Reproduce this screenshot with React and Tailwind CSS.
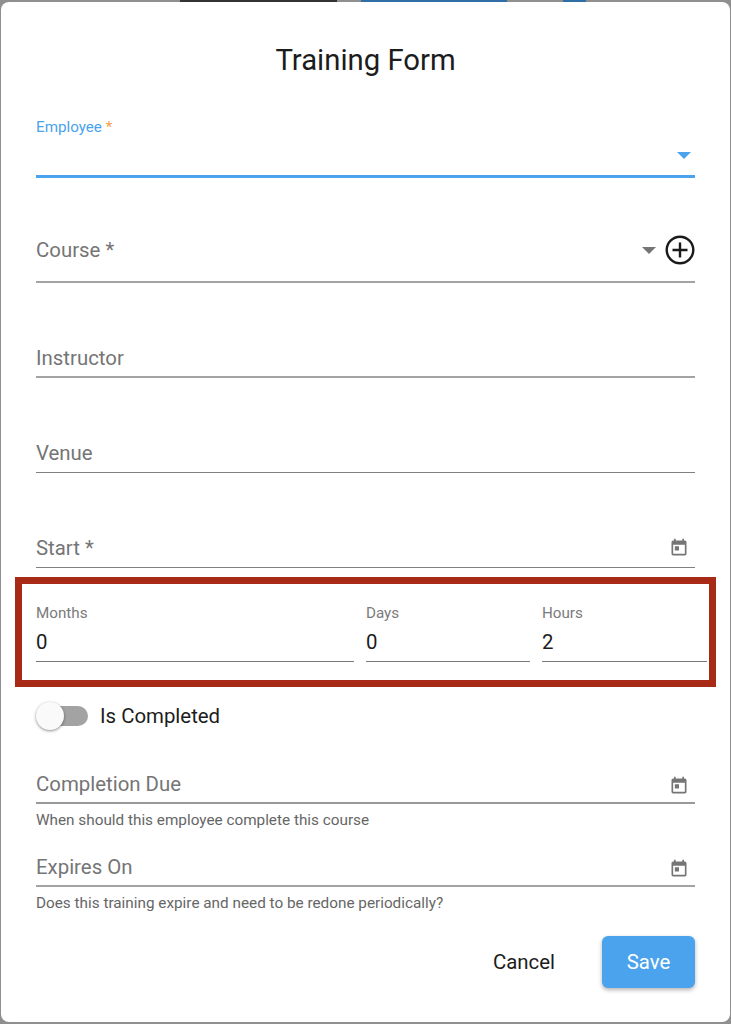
const ROBOTO = "font-['Roboto',sans-serif]";

const CalendarIcon = () => (
  <svg width="20" height="20" viewBox="0 0 24 24" fill="#757575">
    <path d="M19 3h-1V1h-2v2H8V1H6v2H5c-1.11 0-1.99.9-1.99 2L3 19c0 1.1.89 2 2 2h14c1.1 0 2-.9 2-2V5c0-1.1-.9-2-2-2zm0 16H5V8h14v11zM7 10h5v5H7z" />
  </svg>
);

const Caret = ({ color }) => (
  <svg width="14" height="7" viewBox="0 0 14 7" fill={color}>
    <path d="M0 0h14L7 7z" />
  </svg>
);

const PlusCircle = () => (
  <svg width="30" height="30" viewBox="0 0 30 30" fill="none" stroke="#1a1a1a" strokeWidth="2.4">
    <circle cx="15" cy="15" r="13.3" />
    <path d="M15 7.5v15M7.5 15h15" />
  </svg>
);

const DateIcon = ({ pad }) => (
  <div className={`pr-[6px] ${pad}`}>
    <CalendarIcon />
  </div>
);

const Field = ({ label, height, line, labelPad, right, helper }) => (
  <div>
    <div className={`flex items-end justify-between ${line} ${height}`}>
      <span className={`text-[20.4px] leading-[30px] text-[#757575] ${labelPad}`}>{label}</span>
      {right}
    </div>
    {helper && <div className="text-[15.3px] leading-[17px] mt-2 text-[#666666]">{helper}</div>}
  </div>
);

const DurationField = ({ label, value }) => (
  <div className="border-b border-[#777777] h-[59px]">
    <div className="text-[15.2px] leading-[17px] pt-[2px] text-[#7a7a7a]">{label}</div>
    <div className="text-[20.4px] leading-[24px] mt-[8px] text-[#1c1c1c]">{value}</div>
  </div>
);

export default function App() {
  return (
    <div className={`${ROBOTO} w-[731px] h-[1024px] overflow-hidden bg-[#8f8f8f]`}>
      {/* sliver of the page behind the dialog */}
      <div className="flex h-[2px] pl-[180px]">
        <div className="w-[157px] bg-[#333333]" />
        <div className="w-[146px] ml-[24px] bg-[#2f6ea5]" />
        <div className="w-[23px] ml-[56px] bg-[#2f6ea5]" />
      </div>

      <div className="mx-px h-[1020px] rounded-[8px] bg-white px-[35px]">
        <h1 className="pt-[39px] text-center text-[29.3px] leading-[38px] text-[#1c1c1c]">Training Form</h1>

        <div className="mt-[39px] h-[60px] border-b-[3px] border-[#4aa3ec] flex flex-col">
          <div className="text-[15.2px] leading-[17px] pt-px text-[#4aa3ec]">
            Employee <span className="text-[#f0a04b]">*</span>
          </div>
          <div className="flex justify-end pt-[16px] pr-[4px]">
            <Caret color="#4aa3ec" />
          </div>
        </div>

        <div className="mt-[50px]">
          <Field
            label="Course *"
            height="h-[55px]"
            line="border-b-2 border-[#a3a3a3]"
            labelPad="pb-[16px]"
            right={
              <div className="flex items-center gap-[9px] pb-[16px]">
                <Caret color="#757575" />
                <PlusCircle />
              </div>
            }
          />
        </div>
        <div className="mt-[40px]">
          <Field label="Instructor" height="h-[55px]" line="border-b-2 border-[#a3a3a3]" labelPad="pb-[3px]" />
        </div>
        <div className="mt-[40px]">
          <Field label="Venue" height="h-[55px]" line="border-b border-[#808080]" labelPad="pb-1" />
        </div>
        <div className="mt-[40px]">
          <Field
            label="Start *"
            height="h-[55px]"
            line="border-b border-[#808080]"
            labelPad="pb-1"
            right={<DateIcon pad="pb-[9px]" />}
          />
        </div>

        {/* highlighted duration row */}
        <div className="mt-[9px] -mx-[21px] h-[110px] border-[7px] border-[#a72a17] pl-[14px] pr-[2px] pt-[19px] grid grid-cols-[318px_164px_165px] gap-x-[12px]">
          <DurationField label="Months" value="0" />
          <DurationField label="Days" value="0" />
          <DurationField label="Hours" value="2" />
        </div>

        <div className="mt-[14px] flex items-center h-[30px]">
          <div className="relative w-[52px] h-[28px] flex items-center">
            <div className="ml-[3px] w-[49px] h-[20px] rounded-full bg-[#a3a3a3]" />
            <div className="absolute left-0 top-0 w-[28px] h-[28px] rounded-full bg-[#fafafa] shadow-[0_1px_3px_rgba(0,0,0,0.45)]" />
          </div>
          <span className="ml-[12px] text-[20.4px] text-[#1c1c1c]">Is Completed</span>
        </div>

        <div className="mt-[24px]">
          <Field
            label="Completion Due"
            height="h-[49px]"
            line="border-b-2 border-[#999999]"
            labelPad="pb-[3px]"
            helper="When should this employee complete this course"
            right={<DateIcon pad="pb-[6px]" />}
          />
        </div>
        <div className="mt-[3px]">
          <Field
            label="Expires On"
            height="h-[55px]"
            line="border-b-2 border-[#a3a3a3]"
            labelPad="pb-[3px]"
            helper="Does this training expire and need to be redone periodically?"
            right={<DateIcon pad="pb-[6px]" />}
          />
        </div>

        <div className="mt-[24px] flex justify-end items-center">
          <button className="text-[20.4px] text-[#1c1c1c] mr-[47px]">Cancel</button>
          <button className="w-[93px] h-[52px] rounded-[6px] bg-[#4aa3ec] text-[20.4px] text-white shadow-[0_2px_4px_rgba(0,0,0,0.3)]">Save</button>
        </div>
      </div>
    </div>
  );
}
